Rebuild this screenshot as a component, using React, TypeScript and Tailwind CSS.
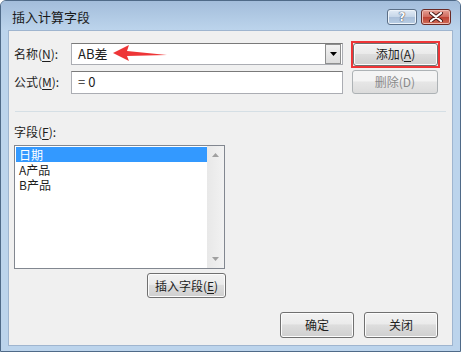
import React from 'react';

const font = { fontFamily: '"Noto Sans CJK SC", "Liberation Sans", sans-serif' };

const Btn: React.FC<{ label: React.ReactNode; className?: string; disabled?: boolean }> = ({ label, className = '', disabled }) => (
  <div
    className={`flex items-center justify-center rounded-[3px] border text-[12px] leading-none ${
      disabled
        ? 'border-[#adb2b5] bg-[linear-gradient(#f4f4f4,#f4f4f4_45%,#e6e6e6_50%,#dcdcdc)] text-[#8a8a8a]'
        : 'border-[#707070] bg-[linear-gradient(#f2f2f2,#ebebeb_45%,#dddddd_50%,#cfcfcf)] text-[#1e1e1e] shadow-[inset_0_0_0_1px_#fcfcfc]'
    } ${className}`}
  >
    {label}
  </div>
);

const U: React.FC<{ c: string }> = ({ c }) => <span className="underline underline-offset-2">{c}</span>;

export default function App() {
  return (
    <div style={font} className="w-[461px] h-[352px] flex flex-col bg-[#bcd4ec] border border-[#4f6a88] rounded-t-[6px] overflow-hidden">
      {/* title bar */}
      <div className="h-[29px] flex items-center justify-between pl-[11px] pr-[9px] bg-[linear-gradient(#a3bddb,#b2cbe5_60%,#bcd4ec)]">
        <span className="text-[13px] text-[#1a1a1a] pt-[2px]">插入计算字段</span>
        <div className="flex gap-[4px] mt-[2px]">
          <div className="w-[30px] h-[16px] rounded-[3px] border border-[#5b6f87] bg-[linear-gradient(#e3ecf6,#c4d5e8_50%,#a9bfd9_51%,#b8cde4)] flex items-center justify-center shadow-[inset_0_0_0_1px_#eef4fa]">
            <span className="text-[12px] font-bold text-[#f8fbff] leading-none [text-shadow:0_0_1px_#334,0_0_1px_#334]" style={{ fontFamily: '"DejaVu Sans", sans-serif' }}>?</span>
          </div>
          <div className="w-[30px] h-[16px] rounded-[3px] border border-[#6b2a25] bg-[linear-gradient(#e5a195,#d0695c_50%,#bd4233_51%,#cf6b58)] flex items-center justify-center shadow-[inset_0_0_0_1px_#eebbb2]">
            <svg width="14" height="10" viewBox="0 0 14 10">
              <path d="M2 1 L12 9 M12 1 L2 9" stroke="#4a1a16" strokeWidth="4" strokeLinecap="round" />
              <path d="M2 1 L12 9 M12 1 L2 9" stroke="#ffffff" strokeWidth="2.2" strokeLinecap="round" />
            </svg>
          </div>
        </div>
      </div>

      {/* client */}
      <div className="relative mx-[7px] mb-[5px] flex-1 bg-[#f0f0f0] border border-[#9fb5cf] text-[12px] text-[#1e1e1e]">
        <div className="flex flex-col px-[5px] pt-[12px]">
          {/* name row */}
          <div className="flex items-center h-[22px]">
            <span className="w-[56px]">名称(<U c="N" />):</span>
            <div className="ml-[1px] w-[272px] h-[22px] flex items-center border border-[#abadb3] border-t-[#7a7a7a] bg-white">
              <span className="flex-1 pl-[6px] text-[13px]">AB差</span>
              <div className="w-[16px] h-[20px] mr-[1px] border border-[#8e8f8f] bg-[linear-gradient(#f2f2f2,#dcdcdc)] flex items-center justify-center">
                <svg width="7" height="4" viewBox="0 0 7 4"><path d="M0 0 H7 L3.5 4 Z" fill="#000" /></svg>
              </div>
            </div>
            <div className="ml-[8px] w-[89px] h-[27px] border-2 border-[#ee3537] flex items-center justify-center">
              <Btn label={<>添加(<U c="A" />)</>} className="w-[85px] h-[23px] border-[#707070]" />
            </div>
          </div>
          {/* formula row */}
          <div className="flex items-center h-[24px] mt-[5px]">
            <span className="w-[56px]">公式(<U c="M" />):</span>
            <div className="ml-[1px] w-[272px] h-[23px] flex items-center border border-[#abadb3] border-t-[#7a7a7a] bg-white">
              <span className="pl-[6px] text-[13px]">= 0</span>
            </div>
            <Btn label="删除(D)" disabled className="ml-[9px] w-[86px] h-[24px]" />
          </div>

          <div className="mt-[17px] h-px bg-[#d5dfe5] mx-px" />

          <div className="mt-[14px] leading-none">字段(<U c="F" />):</div>

          <div className="mt-[7px] w-[211px] h-[124px] border border-[#828790] bg-white flex">
            <div className="flex-1 flex flex-col pt-[1px] pl-[1px] text-[12px]">
              <div className="h-[15px] bg-[#3399ff] text-white pl-[3px] leading-[15px]">日期</div>
              <div className="h-[15px] pl-[3px] leading-[15px]">A产品</div>
              <div className="h-[15px] pl-[3px] leading-[15px]">B产品</div>
            </div>
            <div className="w-[17px] bg-[linear-gradient(90deg,#e8e8e8,#f2f2f2)] flex flex-col justify-between items-center py-[7px]">
              <svg width="7" height="4" viewBox="0 0 7 4"><path d="M0 4 H7 L3.5 0 Z" fill="#a0a0a0" /></svg>
              <svg width="7" height="4" viewBox="0 0 7 4"><path d="M0 0 H7 L3.5 4 Z" fill="#a0a0a0" /></svg>
            </div>
          </div>

          <div className="flex justify-end w-[211px] mt-[4px]">
            <Btn label={<>插入字段(<U c="E" />)</>} className="w-[79px] h-[25px] mr-[-1px]" />
          </div>

          <div className="flex justify-end gap-[10px] mt-[14px] pr-[9px]">
            <Btn label="确定" className="w-[74px] h-[26px]" />
            <Btn label="关闭" className="w-[74px] h-[26px]" />
          </div>
        </div>

        {/* red annotation arrow */}
        <svg className="absolute left-[103px] top-[13px]" width="56" height="18" viewBox="0 0 56 18">
          <path d="M1 9 L17 1 L15 7 L55 11 L15 12 L17 17 Z" fill="#ee3537" />
        </svg>
      </div>
    </div>
  );
}
